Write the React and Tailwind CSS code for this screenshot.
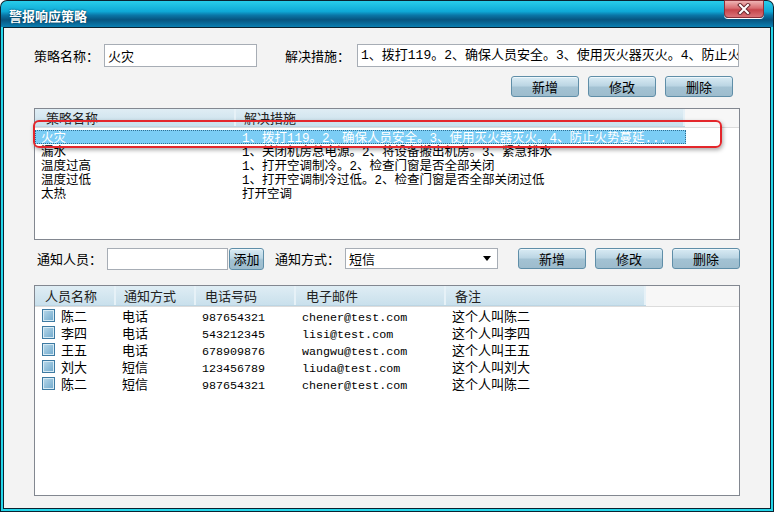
const cjk = "font-['Noto_Sans_CJK_SC',sans-serif]";
const mono = "font-['Liberation_Mono','Noto_Sans_CJK_SC',monospace]";

const strategies = [
  { name: "火灾", plan: "1、拨打119。2、确保人员安全。3、使用灭火器灭火。4、防止火势蔓延..." },
  { name: "漏水", plan: "1、关闭机房总电源。2、将设备搬出机房。3、紧急排水" },
  { name: "温度过高", plan: "1、打开空调制冷。2、检查门窗是否全部关闭" },
  { name: "温度过低", plan: "1、打开空调制冷过低。2、检查门窗是否全部关闭过低" },
  { name: "太热", plan: "打开空调" },
];

const people = [
  { name: "陈二", way: "电话", phone: "987654321", mail: "chener@test.com", note: "这个人叫陈二" },
  { name: "李四", way: "电话", phone: "543212345", mail: "lisi@test.com", note: "这个人叫李四" },
  { name: "王五", way: "电话", phone: "678909876", mail: "wangwu@test.com", note: "这个人叫王五" },
  { name: "刘大", way: "短信", phone: "123456789", mail: "liuda@test.com", note: "这个人叫刘大" },
  { name: "陈二", way: "短信", phone: "987654321", mail: "chener@test.com", note: "这个人叫陈二" },
];

const Btn = ({ children, w = "w-[68px]", h = "h-[21px]" }) => (
  <button
    className={`${w} ${h} shrink-0 rounded-[3px] border border-[#5f8ea8] bg-[linear-gradient(#d9ebf4,#bcd6e4_45%,#a3c2d3_55%,#9dbccd)] text-[13px] leading-none text-black ${cjk} shadow-[inset_0_1px_0_#eef7fb]`}
  >
    {children}
  </button>
);

const HeadCell = ({ w, children, pl = "pl-[9px]" }) => (
  <div className={`${w} ${pl} h-full shrink-0 flex items-center border-r-2 border-[#e6f1f7] text-[13px] text-[#222]`}>
    {children}
  </div>
);

const CloseX = () => (
  <svg width="14" height="12" viewBox="0 0 14 12">
    <path d="M3 2 L11 10 M11 2 L3 10" stroke="#6a2a30" strokeWidth="4" strokeLinecap="square" />
    <path d="M3 2 L11 10 M11 2 L3 10" stroke="#ffffff" strokeWidth="2" strokeLinecap="square" />
  </svg>
);

const Check = () => (
  <div className="w-[13px] h-[13px] shrink-0 self-center border border-[#3d7aa2] bg-[linear-gradient(135deg,#b9d9ea,#6ea8cc)] shadow-[inset_0_0_0_1px_#d6eaf4]" />
);

export default function App() {
  return (
    <div className={`w-[774px] h-[512px] bg-[#0b2230] p-px rounded-t-[7px] flex flex-col relative ${cjk}`}>
      <div className="h-[26px] shrink-0 rounded-t-[6px] bg-[linear-gradient(#28cdea,#0fa9d6_40%,#0a75a6_55%,#075580_72%,#0a7fb2)] flex items-center pl-[8px] pt-[2px]">
        <span className="text-white font-bold text-[13px] leading-none [text-shadow:0_0_2px_#03324a]">警报响应策略</span>
      </div>
      <div className="absolute top-0 right-[10px] w-[40px] h-[18px] rounded-b-[4px] border border-[#8c3038] bg-[linear-gradient(#eeb4b4,#d86c70_45%,#c6454b_55%,#d97378)] flex items-center justify-center shadow-[0_1px_0_#ffffff]">
        <CloseX />
      </div>
      <div className="flex-1 border-x-2 border-b-2 border-[#25d6ea] flex flex-col">
        <div className="flex-1 border border-[#0b2230] bg-[#f3f3f3] pl-[30px] flex flex-col">
          {/* row 1 */}
          <div className="mt-[16px] h-[23px] flex items-center text-[13px] text-black">
            <span className="w-[70px] shrink-0">策略名称：</span>
            <div className="w-[153px] h-[23px] shrink-0 border border-[#a7adb5] bg-white flex items-center pl-[3px]">火灾</div>
            <span className="w-[72px] ml-[28px] shrink-0">解决措施：</span>
            <div className="w-[382px] h-[23px] shrink-0 border border-[#a7adb5] bg-white flex items-center pl-[3px] overflow-hidden">
              <span className={`whitespace-nowrap ${mono} text-[13px]`}>1、拨打119。2、确保人员安全。3、使用灭火器灭火。4、防止火</span>
            </div>
          </div>
          {/* buttons */}
          <div className="mt-[9px] flex gap-[9px] pl-[477px]">
            <Btn>新增</Btn>
            <Btn>修改</Btn>
            <Btn>删除</Btn>
          </div>
          {/* list 1 */}
          <div className="mt-[11px] w-[706px] h-[132px] shrink-0 border border-[#828790] bg-white relative">
            <div className="h-[19px] flex border-b border-[#dcdcdc] bg-[#f7f7f7]">
              <div className="flex h-full bg-[linear-gradient(#dfedf4,#c9e0ec)] border-b border-[#bcd5e3]">
                <HeadCell w="w-[201px]" pl="pl-[11px]">策略名称</HeadCell>
                <HeadCell w="w-[449px]" pl="pl-[8px]">解决措施</HeadCell>
              </div>
            </div>
            <div className="mt-[2px] flex flex-col">
              {strategies.map((s, i) => (
                <div
                  key={i}
                  className={`h-[14px] w-[651px] flex items-baseline text-[12.5px] leading-[14px] whitespace-nowrap ${
                    i === 0 ? "bg-[#7bcdf5] text-white outline outline-1 outline-dotted outline-[#2f6f93] -outline-offset-1" : "text-black"
                  }`}
                >
                  <span className="w-[201px] pl-[6px] shrink-0">{s.name}</span>
                  <span className={`pl-[6px] ${mono}`}>{s.plan}</span>
                </div>
              ))}
            </div>
            <div className="absolute left-[-2px] top-[11px] w-[689px] h-[28px] rounded-[6px] border-2 border-[#e3262b] shadow-[1px_2px_4px_rgba(0,0,0,0.35)]" />
          </div>
          {/* row 2 */}
          <div className="mt-[7px] h-[23px] flex items-center text-[13px] text-black">
            <span className="ml-[3px] w-[70px] shrink-0">通知人员：</span>
            <div className="w-[121px] h-[22px] shrink-0 border border-[#a7adb5] bg-white" />
            <div className="ml-[1px]">
              <Btn w="w-[35px]" h="h-[22px]">添加</Btn>
            </div>
            <span className="ml-[11px] w-[70px] shrink-0">通知方式：</span>
            <div className="w-[153px] h-[21px] shrink-0 border border-[#a7adb5] bg-white flex items-center pl-[3px] pr-[6px] justify-between">
              <span>短信</span>
              <svg width="8" height="5" viewBox="0 0 8 5">
                <polygon points="0,0 8,0 4,5" fill="#000" />
              </svg>
            </div>
            <div className="ml-[20px] flex gap-[9px]">
              <Btn>新增</Btn>
              <Btn>修改</Btn>
              <Btn>删除</Btn>
            </div>
          </div>
          {/* list 2 */}
          <div className="mt-[15px] w-[706px] h-[211px] shrink-0 border border-[#828790] bg-white">
            <div className="h-[21px] flex border-b border-[#dcdcdc] bg-[#f7f7f7]">
              <div className="flex h-full bg-[linear-gradient(#dfedf4,#c9e0ec)] border-b border-[#bcd5e3]">
                <HeadCell w="w-[81px]" pl="pl-[10px]">人员名称</HeadCell>
                <HeadCell w="w-[80px]" pl="pl-[8px]">通知方式</HeadCell>
                <HeadCell w="w-[100px]" pl="pl-[9px]">电话号码</HeadCell>
                <HeadCell w="w-[150px]" pl="pl-[10px]">电子邮件</HeadCell>
                <HeadCell w="w-[200px]" pl="pl-[9px]">备注</HeadCell>
              </div>
            </div>
            <div className="flex flex-col">
              {people.map((p, i) => (
                <div key={i} className="h-[17px] flex items-baseline text-[13px] leading-[17px] text-black whitespace-nowrap">
                  <div className="w-[81px] shrink-0 flex items-baseline pl-[7px] gap-[6px]">
                    <Check />
                    <span>{p.name}</span>
                  </div>
                  <span className="w-[80px] shrink-0 pl-[6px]">{p.way}</span>
                  <span className={`w-[100px] shrink-0 pl-[6px] text-[11.7px] ${mono}`}>{p.phone}</span>
                  <span className={`w-[150px] shrink-0 pl-[6px] text-[11.7px] ${mono}`}>{p.mail}</span>
                  <span className="w-[200px] shrink-0 pl-[6px]">{p.note}</span>
                </div>
              ))}
            </div>
          </div>
        </div>
      </div>
    </div>
  );
}
